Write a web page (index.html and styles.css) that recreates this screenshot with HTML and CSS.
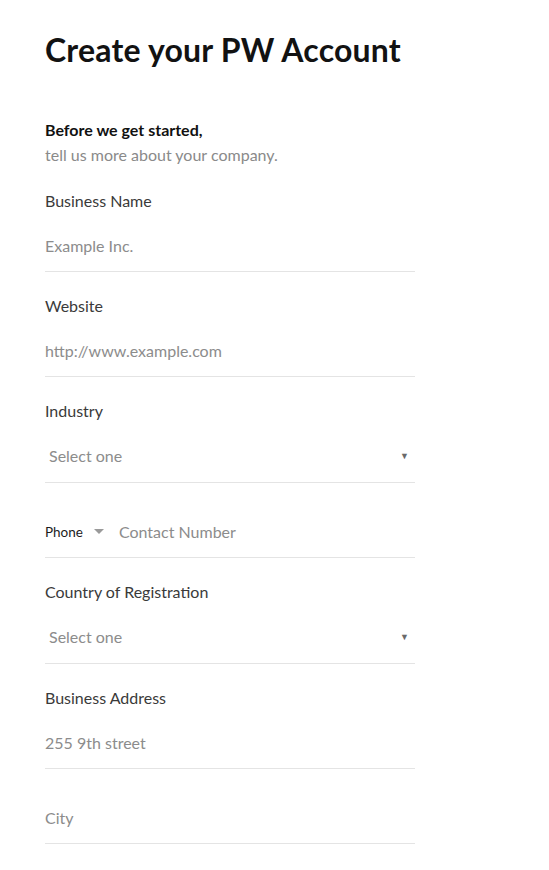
FILE: index.html
```html
<!DOCTYPE html>
<html lang="en">
<head>
<meta charset="utf-8">
<title>Create your PW Account</title>
<link rel="stylesheet" href="styles.css">
</head>
<body>
<main class="page">
  <h1 class="title">Create your PW Account</h1>
  <div class="intro">
    <p class="intro-lead">Before we get started,</p>
    <p class="intro-sub">tell us more about your company.</p>
  </div>
  <form class="form">
    <div class="field">
      <label class="label">Business Name</label>
      <div class="control"><span class="placeholder">Example Inc.</span></div>
    </div>
    <div class="field">
      <label class="label">Website</label>
      <div class="control"><span class="placeholder">http://www.example.com</span></div>
    </div>
    <div class="field">
      <label class="label">Industry</label>
      <div class="control select"><span class="placeholder">Select one</span><span class="arrow">&#9660;</span></div>
    </div>
    <div class="field">
      <div class="control phone">
        <span class="phone-code">Phone</span>
        <span class="caret"></span>
        <span class="placeholder">Contact Number</span>
      </div>
    </div>
    <div class="field">
      <label class="label">Country of Registration</label>
      <div class="control select"><span class="placeholder">Select one</span><span class="arrow">&#9660;</span></div>
    </div>
    <div class="field">
      <label class="label">Business Address</label>
      <div class="control"><span class="placeholder">255 9th street</span></div>
    </div>
    <div class="field">
      <div class="control"><span class="placeholder">City</span></div>
    </div>
  </form>
</main>
</body>
</html>
```

FILE: styles.css
```css
* { box-sizing: border-box; }
html, body { margin: 0; padding: 0; background: #fff; }
body {
  font-family: "Lato", "Liberation Sans", sans-serif;
  color: #222;
}
.page {
  width: 370px;
  margin-left: 45px;
  padding-top: 30px;
}
.title {
  margin: 0;
  font-size: 32px;
  line-height: 40px;
  font-weight: 700;
  letter-spacing: 0.2px;
  color: #121212;
}
.intro {
  margin-top: 47px;
}
.intro p {
  margin: 0;
  line-height: 25px;
  font-size: 16px;
}
.intro-lead {
  font-weight: 700;
  color: #111;
}
.intro-sub {
  color: #8a8a8a;
}
.form {
  display: flex;
  flex-direction: column;
  gap: 25px;
  margin-top: 25px;
}
.field {
  display: flex;
  flex-direction: column;
}
.label {
  font-size: 16px;
  line-height: 18px;
  color: #3a3a3a;
  margin-bottom: 12px;
}
.control {
  height: 50px;
  padding-bottom: 2px;
  border-bottom: 1px solid #e4e4e4;
  display: flex;
  align-items: center;
  font-size: 16px;
}
.placeholder {
  color: #8c8c8c;
}
.select {
  height: 51px;
  padding-left: 4px;
  padding-right: 6px;
  padding-bottom: 4px;
  justify-content: space-between;
}
.arrow {
  font-size: 9px;
  color: #6a6a6a;
}
.phone .phone-code {
  font-size: 13.5px;
  color: #1c1c1c;
}
.caret {
  width: 0;
  height: 0;
  border-left: 5px solid transparent;
  border-right: 5px solid transparent;
  border-top: 5px solid #9a9a9a;
  margin-left: 11px;
  margin-right: 15px;
}
```
